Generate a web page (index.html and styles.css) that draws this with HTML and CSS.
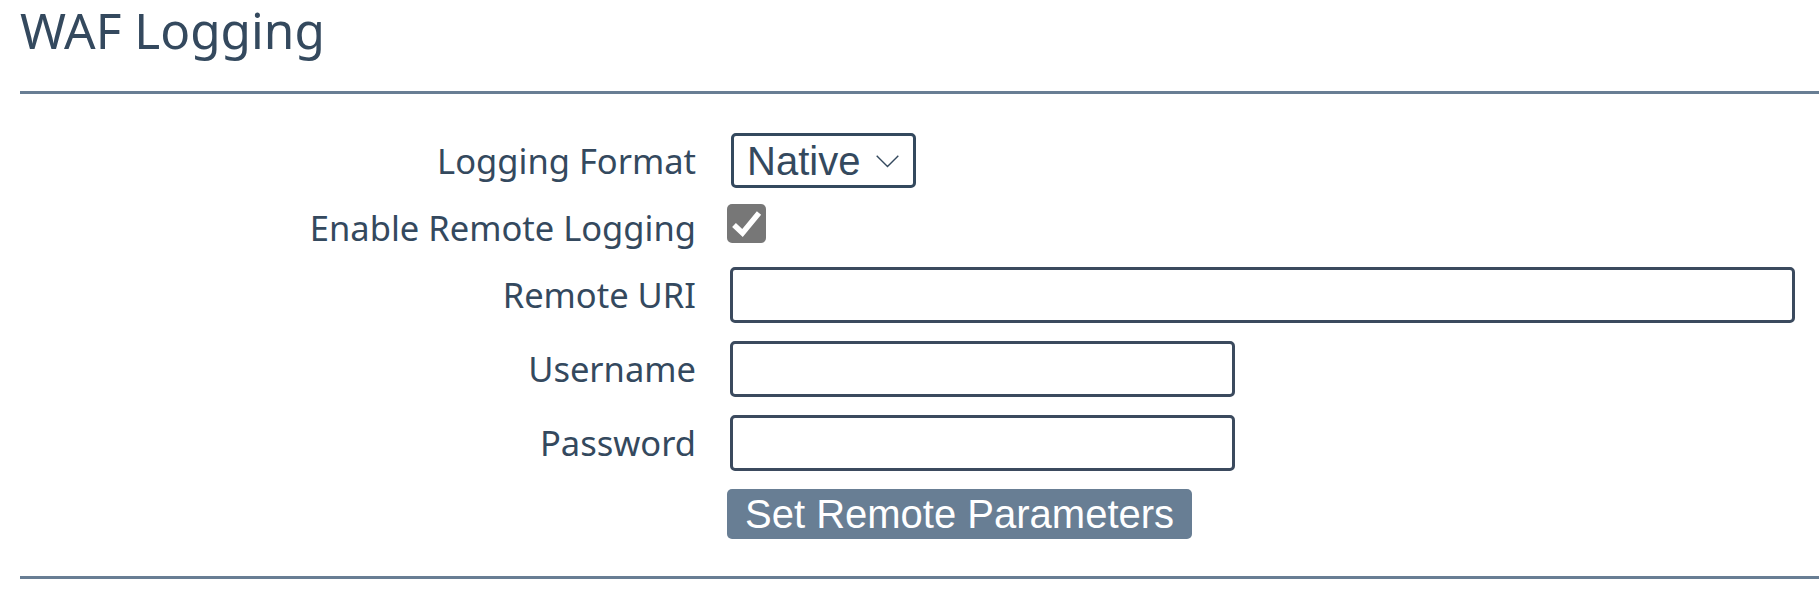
FILE: index.html
```html
<!DOCTYPE html>
<html lang="en">
<head>
<meta charset="utf-8">
<title>WAF Logging</title>
<link rel="stylesheet" href="styles.css">
</head>
<body>
<div class="page">
  <h1 class="title">WAF Logging</h1>
  <hr class="rule">
  <form class="form">
    <label class="lbl" for="fmt">Logging Format</label>
    <div class="ctl">
      <div class="select-wrap">
        <select id="fmt" class="select"><option>Native</option></select>
        <svg class="chev" width="23" height="13" viewBox="0 0 23 13"><path d="M0.7 0.7 L11.5 11.5 L22.3 0.7" fill="none" stroke="#34495e" stroke-width="1.4"/></svg>
      </div>
    </div>

    <label class="lbl">Enable Remote Logging</label>
    <div class="ctl ctl-check">
      <span class="checkbox" role="checkbox" aria-checked="true">
        <svg width="39" height="39" viewBox="0 0 39 39"><path d="M7 21 L15.5 29 L32 9" fill="none" stroke="#fff" stroke-width="5.5"/></svg>
      </span>
    </div>

    <label class="lbl" for="uri">Remote URI</label>
    <div class="ctl"><input id="uri" class="input input-wide" type="text"></div>

    <label class="lbl" for="user">Username</label>
    <div class="ctl"><input id="user" class="input input-mid" type="text"></div>

    <label class="lbl" for="pw">Password</label>
    <div class="ctl"><input id="pw" class="input input-mid" type="password"></div>

    <span class="lbl"></span>
    <div class="ctl"><button type="button" class="btn">Set Remote Parameters</button></div>
  </form>
  <hr class="rule rule-bottom">
</div>
</body>
</html>
```
FILE: styles.css
```css
html, body {
  margin: 0;
  padding: 0;
  background: #fff;
}
body {
  font-family: "Noto Sans", "DejaVu Sans", sans-serif;
  color: #34495e;
  overflow: hidden;
}
.page {
  padding-left: 20px;
}
.title {
  margin: 0;
  font-size: 49.5px;
  font-weight: 400;
  line-height: 60px;
  color: #34495e;
}
.rule {
  border: 0;
  height: 3px;
  background: #687e94;
  margin: 31px 0 0 0;
}
.rule-bottom {
  margin-top: 37px;
}
.form {
  display: grid;
  grid-template-columns: 676px 1fr;
  column-gap: 34px;
  row-gap: 18px;
  align-items: center;
  margin-top: 39px;
}
.lbl {
  font-size: 34.5px;
  line-height: 40px;
  text-align: right;
  color: #34495e;
}
.ctl {
  display: flex;
  align-items: center;
}
.select-wrap {
  position: relative;
  display: inline-flex;
}
.select {
  appearance: none;
  -webkit-appearance: none;
  width: 185px;
  height: 55px;
  margin: 0 0 0 1px;
  padding: 0 0 0 13px;
  border: 3px solid #34495e;
  border-radius: 5px;
  background: #fff;
  font-family: "Liberation Sans", Arial, sans-serif;
  font-size: 40px;
  color: #34495e;
}
.chev {
  position: absolute;
  left: 146px;
  top: 22px;
  pointer-events: none;
}
.ctl-check {
  margin: -2px 0 6px -3px;
}
.checkbox {
  display: block;
  width: 39px;
  height: 39px;
  border-radius: 5px;
  background: #777777;
}
.checkbox svg {
  display: block;
}
.input {
  box-sizing: border-box;
  height: 56px;
  margin: 0;
  padding: 0 12px;
  border: 3px solid #3b4a5e;
  border-radius: 5px;
  background: #fff;
  font-family: "Liberation Sans", Arial, sans-serif;
  font-size: 30px;
  color: #34495e;
}
.input-wide {
  width: 1065px;
}
.input-mid {
  width: 505px;
}
.btn {
  margin-left: -3px;
  height: 50px;
  padding: 0 18px;
  border: 0;
  border-radius: 5px;
  background: #687e94;
  color: #fff;
  font-family: "Liberation Sans", Arial, sans-serif;
  font-size: 40px;
  line-height: 50px;
}
```
